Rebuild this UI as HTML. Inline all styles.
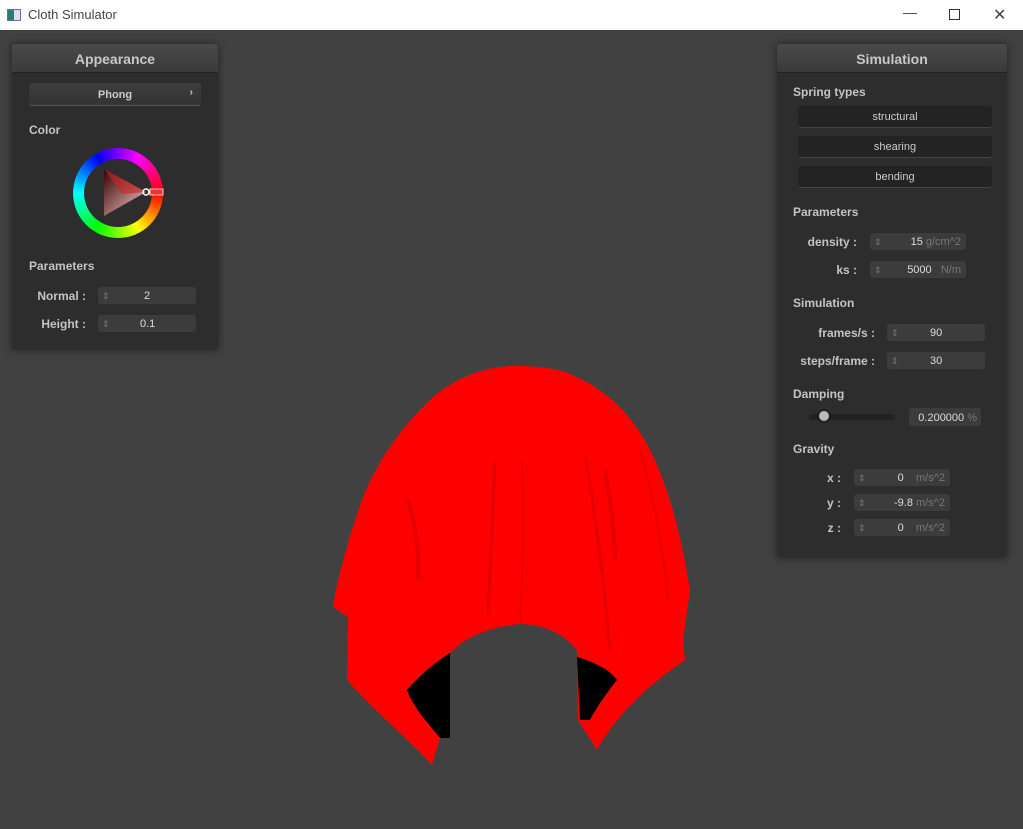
<!DOCTYPE html>
<html><head><style>
body{margin:0;width:1023px;height:829px;background:#414141;font-family:"Liberation Sans",sans-serif;position:relative;overflow:hidden}
.tb{position:absolute;left:0;top:0;width:1023px;height:30px;background:#fff;color:#444;font-size:13px}
.panel{position:absolute;background:#2d2d2d;box-shadow:0 0 8px rgba(0,0,0,.5);border-radius:3px}
.ph{height:28px;background:linear-gradient(#4a4a4a,#3a3a3a);border-bottom:1px solid #222;color:#c8c8c8;font-weight:bold;font-size:14px;text-align:center;line-height:30px;border-radius:3px 3px 0 0}
.t{position:absolute;color:#c4c4c4;font-weight:bold;font-size:12px}
.l{position:absolute;color:#c4c4c4;font-weight:bold;font-size:12px;text-align:right}
.box{position:absolute;background:#3c3c3c;border-radius:3px;height:17px;color:#ddd;font-size:11px;line-height:18px}
.box .s{position:absolute;left:4px;top:0;color:#777;font-size:9px}
.u{color:#777}
.btn{position:absolute;left:21px;width:194px;height:21px;background:#232323;border-radius:3px;border-bottom:1px solid #444;color:#ccc;font-size:11px;text-align:center;line-height:23px}
</style></head><body>
<div class="tb"><div style="position:absolute;left:7px;top:9px;width:12px;height:10px;border:1px solid #678;background:linear-gradient(90deg,#2a7a7a 50%,#dde 50%)"></div><span style="position:absolute;left:28px;top:7px">Cloth Simulator</span>
<span style="position:absolute;left:903px;top:4px;font-size:14px">&#8212;</span>
<div style="position:absolute;left:949px;top:9px;width:9px;height:9px;border:1px solid #333"></div>
<span style="position:absolute;left:993px;top:5px;font-size:16px">&#10005;</span></div>

<svg style="position:absolute;left:0;top:0" width="1023" height="829">
<path d="M515 366 C485 366 455 378 432 398 C400 428 375 465 362 500 C348 540 338 575 333 607 L348 617 L347 680 C375 712 410 740 432 765 L440 738 L450 738 L450 653 C470 632 500 626 520 624 C545 624 565 635 577 650 L578 720 L597 750 C610 725 640 690 685 660 L683 640 L690 590 C682 540 670 490 650 450 C630 410 600 385 565 372 C550 367 530 366 515 366 Z" fill="#f00"/>
<path d="M407 690 C420 675 435 662 450 653 L450 738 L440 738 C425 720 412 705 407 690 Z" fill="#000"/>
<path d="M577 657 C595 662 610 670 617 680 C605 695 595 710 590 720 L580 720 Z" fill="#000"/>
<g fill="none" stroke="#a00" opacity=".3">
<path d="M495 460 Q492 540 488 615" stroke-width="3"/>
<path d="M522 460 Q525 540 520 620" stroke-width="2"/>
<path d="M585 455 Q600 540 610 650" stroke-width="3"/>
<path d="M408 500 Q420 540 418 580" stroke-width="4"/>
<path d="M640 450 Q660 520 668 600" stroke-width="2"/>
<path d="M605 470 Q615 530 615 560" stroke-width="4"/>
</g>
</svg>

<div class="panel" style="left:12px;top:44px;width:206px;height:306px">
<div class="ph">Appearance</div>
<div style="position:absolute;left:17px;top:39px;width:172px;height:22px;background:linear-gradient(#3e3e3e,#333);border-radius:3px;border-bottom:1px solid #555;color:#ccc;font-size:11px;font-weight:bold;text-align:center;line-height:24px">Phong<span style="position:absolute;right:8px;font-size:10px;line-height:20px">&#8250;</span></div>
<div class="t" style="left:17px;top:79px">Color</div>
<div style="position:absolute;left:61px;top:104px;width:90px;height:90px;border-radius:50%;background:conic-gradient(from 90deg,#f00,#ff0 60deg,#0f0 120deg,#0ff 180deg,#00f 240deg,#f0f 300deg,#f00)"></div>
<div style="position:absolute;left:72px;top:115px;width:68px;height:68px;border-radius:50%;background:#2d2d2d"></div>
<svg style="position:absolute;left:0;top:0" width="206" height="306"><defs><linearGradient id="g" x1="0" y1="0" x2="1" y2="1"><stop offset="0" stop-color="#300"/><stop offset="1" stop-color="#fcc"/></linearGradient></defs>
<path d="M92 125 L134 148 L92 172 Z" fill="url(#g)"/><path d="M92 125 L134 148 L110 150Z" fill="#c22" opacity=".6"/>
<circle cx="134" cy="148" r="3" fill="none" stroke="#fff" stroke-width="1.5"/>
<rect x="138" y="145" width="13" height="6" fill="#e33" stroke="#fcc"/></svg>
<div class="t" style="left:17px;top:215px">Parameters</div>
<div class="l" style="left:10px;top:245px;width:64px">Normal :</div>
<div class="box" style="left:86px;top:243px;width:98px"><span class="s">&#8661;</span><span style="position:absolute;left:46px">2</span></div>
<div class="l" style="left:10px;top:273px;width:64px">Height :</div>
<div class="box" style="left:86px;top:271px;width:98px"><span class="s">&#8661;</span><span style="position:absolute;left:42px">0.1</span></div>
</div>

<div class="panel" style="left:777px;top:44px;width:230px;height:514px">
<div class="ph">Simulation</div>
<div class="t" style="left:16px;top:41px">Spring types</div>
<div class="btn" style="top:62px">structural</div>
<div class="btn" style="top:92px">shearing</div>
<div class="btn" style="top:122px">bending</div>
<div class="t" style="left:16px;top:161px">Parameters</div>
<div class="l" style="left:10px;top:191px;width:70px">density :</div>
<div class="box" style="left:93px;top:189px;width:96px"><span class="s">&#8661;</span><span style="position:absolute;right:5px">15 <span class="u">g/cm^2</span></span></div>
<div class="l" style="left:10px;top:219px;width:70px">ks :</div>
<div class="box" style="left:93px;top:217px;width:96px"><span class="s">&#8661;</span><span style="position:absolute;right:5px">5000&nbsp;&nbsp; <span class="u">N/m</span></span></div>
<div class="t" style="left:16px;top:252px">Simulation</div>
<div class="l" style="left:10px;top:282px;width:88px">frames/s :</div>
<div class="box" style="left:110px;top:280px;width:98px"><span class="s">&#8661;</span><span style="position:absolute;left:43px">90</span></div>
<div class="l" style="left:10px;top:310px;width:88px">steps/frame :</div>
<div class="box" style="left:110px;top:308px;width:98px"><span class="s">&#8661;</span><span style="position:absolute;left:43px">30</span></div>
<div class="t" style="left:16px;top:343px">Damping</div>
<div style="position:absolute;left:32px;top:370px;width:86px;height:6px;background:#222;border-radius:3px"></div>
<div style="position:absolute;left:42px;top:367px;width:10px;height:10px;border-radius:50%;background:#bbb;box-shadow:0 0 3px #000"></div>
<div class="box" style="left:132px;top:364px;width:72px;height:18px"><span style="position:absolute;right:4px;top:1px">0.200000 <span class="u">%</span></span></div>
<div class="t" style="left:16px;top:398px">Gravity</div>
<div class="l" style="left:10px;top:427px;width:54px">x :</div>
<div class="box" style="left:77px;top:425px;width:96px"><span class="s">&#8661;</span><span style="position:absolute;right:5px">0&nbsp;&nbsp;&nbsp; <span class="u">m/s^2</span></span></div>
<div class="l" style="left:10px;top:452px;width:54px">y :</div>
<div class="box" style="left:77px;top:450px;width:96px"><span class="s">&#8661;</span><span style="position:absolute;right:5px">-9.8 <span class="u">m/s^2</span></span></div>
<div class="l" style="left:10px;top:477px;width:54px">z :</div>
<div class="box" style="left:77px;top:475px;width:96px"><span class="s">&#8661;</span><span style="position:absolute;right:5px">0&nbsp;&nbsp;&nbsp; <span class="u">m/s^2</span></span></div>
</div>
</body></html>
